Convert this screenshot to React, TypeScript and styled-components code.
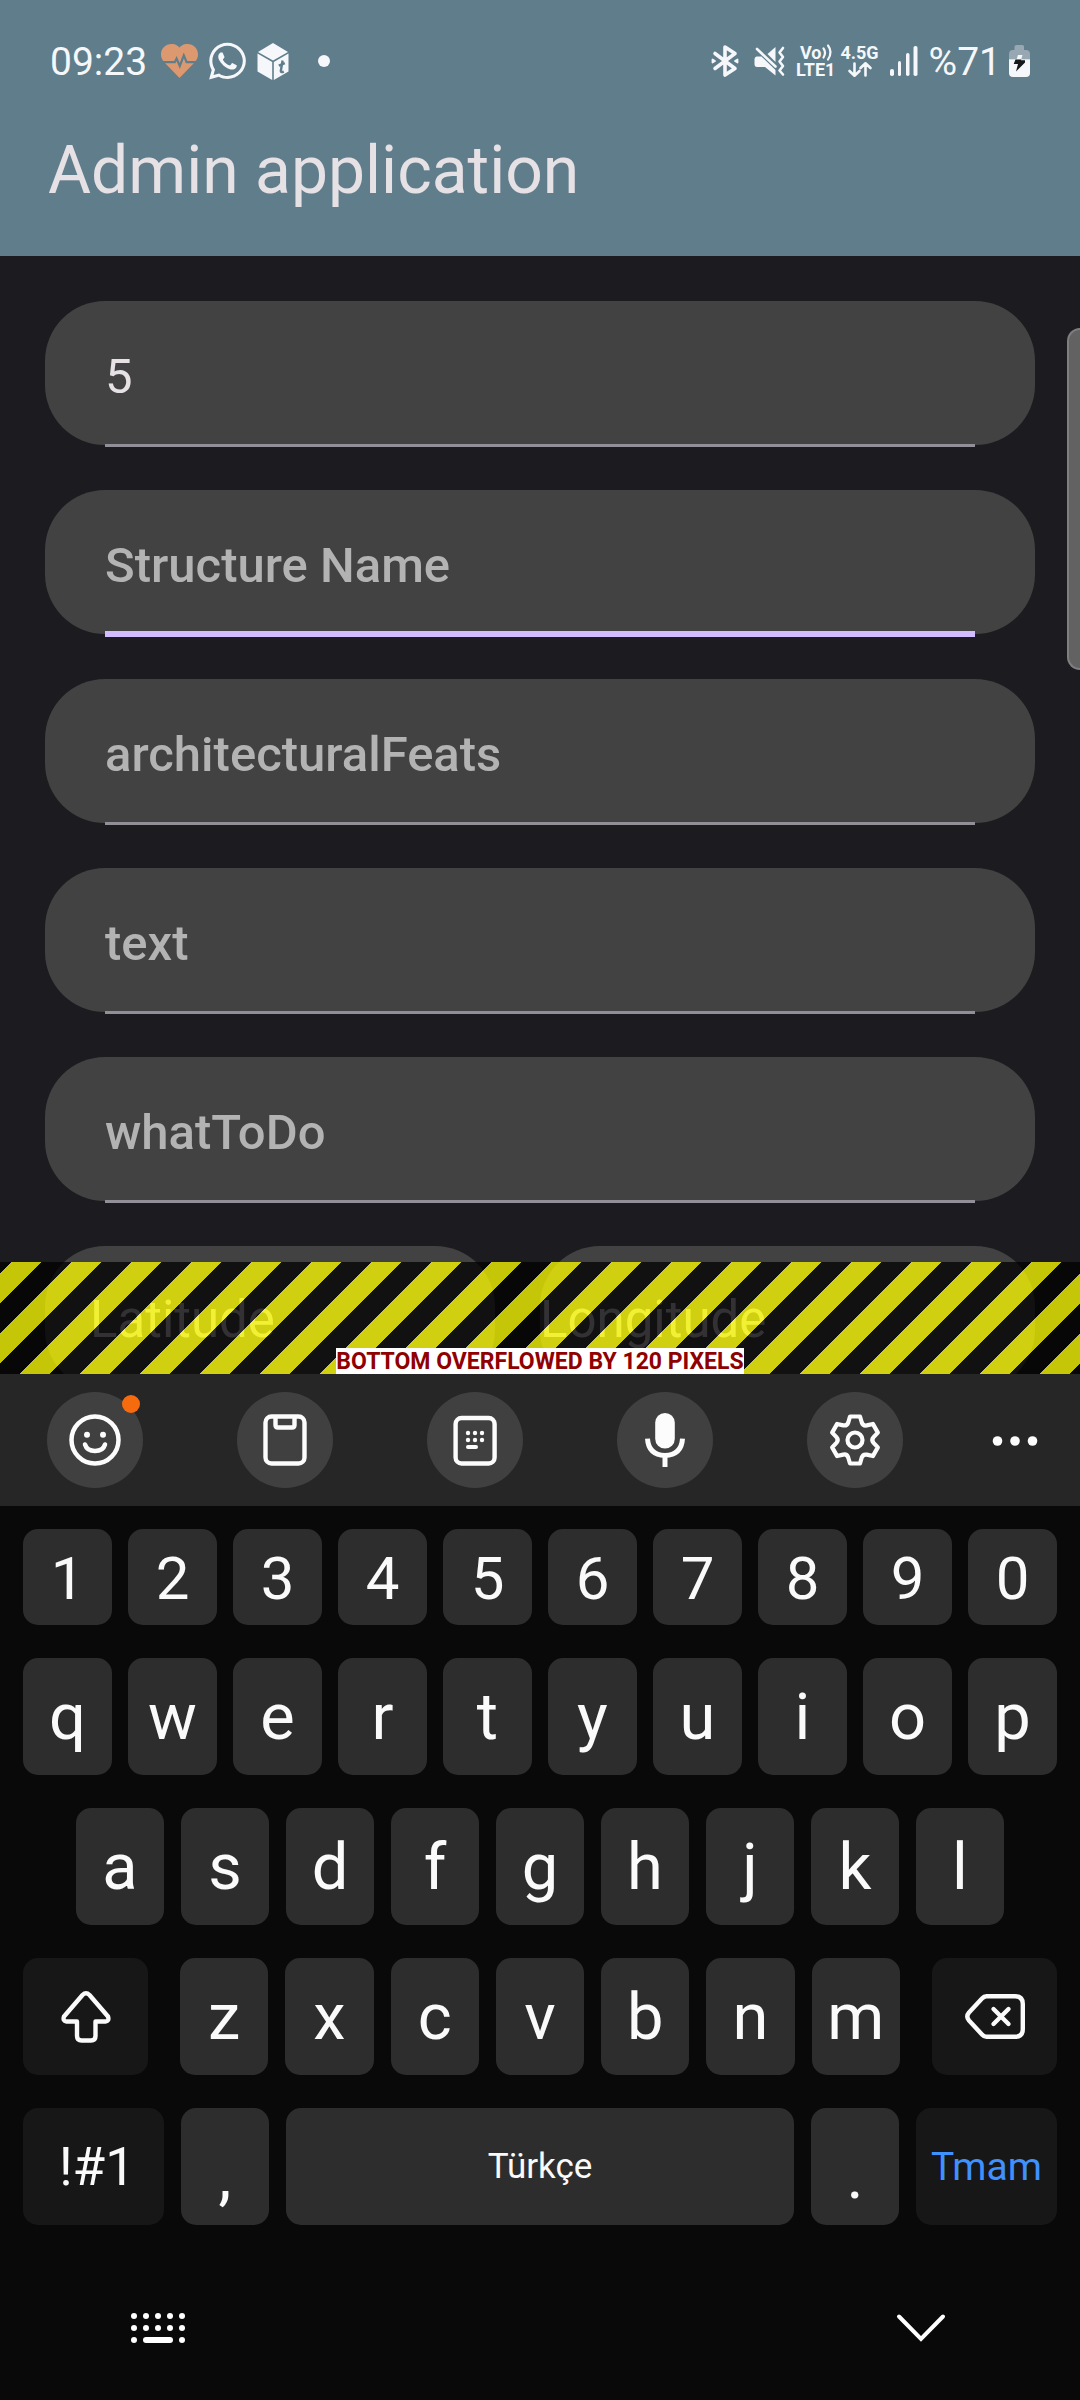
import React from "react";
import styled, { createGlobalStyle, css } from "styled-components";
import { FaWhatsapp } from "react-icons/fa";

const GlobalStyle = createGlobalStyle`
  *, *::before, *::after { box-sizing: border-box; }
  html, body { margin: 0; background: #090909; }
  body { font-family: Roboto, "Noto Sans", sans-serif; }
  button, input { font-family: inherit; margin: 0; padding: 0; border: 0; }
  svg { display: block; flex: none; overflow: visible; }
`;

const Screen = styled.div`
  position: relative;
  display: flex;
  flex-direction: column;
  height: 100vh;
  min-height: 1600px;
  overflow: hidden;
  background: #1c1b1f;
`;

/* ---------- header ---------- */

const Header = styled.header`
  flex: none;
  background: #607d8b;
`;

const StatusBar = styled.div`
  display: flex;
  justify-content: space-between;
  align-items: center;
  height: 88px;
  padding: 34px 50px 0 50px;
  color: #f5f7fa;
`;

const StatusGroup = styled.div<{ $gap: number }>`
  display: flex;
  align-items: center;
  gap: ${(p) => p.$gap}px;
`;

const StatusText = styled.span`
  padding-top: 2px;
  font-size: 39px;
  line-height: 52px;
`;

const Clock = styled(StatusText)`
  margin-right: 3px;
`;

const ChatIcon = styled(FaWhatsapp)`
  width: 37px;
  height: 42px;
`;

const NetworkBadge = styled.span`
  display: flex;
  flex-direction: column;
  align-items: center;
  font-size: 18px;
  line-height: 17px;
  font-weight: 700;
`;

const BadgeLine = styled.span`
  display: flex;
  align-items: center;
  height: 17px;
`;

const Dot = styled.span`
  width: 12px;
  height: 12px;
  margin-left: 18px;
  border-radius: 50%;
  background: currentColor;
`;

const TitleBar = styled.div`
  display: flex;
  align-items: center;
  height: 168px;
  padding: 0 48px 3px;
`;

const Title = styled.h1`
  margin: 0;
  color: #e6e1e5;
  font-size: 66px;
  line-height: 84px;
  font-weight: 400;
`;

/* ---------- form ---------- */

const Body = styled.main`
  position: relative;
  flex: 1;
  min-height: 0;
  overflow: hidden;
`;

const Form = styled.form`
  display: flex;
  flex-direction: column;
  gap: 45px;
  padding: 45px;
`;

const FieldRow = styled.div`
  display: grid;
  grid-template-columns: 450fr 495fr;
  gap: 45px;
`;

const Field = styled.label`
  position: relative;
  display: block;
  height: 144px;
  padding: 0 60px;
  border-radius: 60px;
  background: #424242;
`;

const HalfField = styled(Field)<{ $inset: number }>`
  padding: 0 0 0 ${(p) => p.$inset}px;
`;

const TextInput = styled.input<{ $light?: boolean }>`
  display: block;
  width: 100%;
  height: 144px;
  padding-top: ${(p) => (p.$light ? 2 : 6)}px;
  background: transparent;
  outline: none;
  color: #e6e1e5;
  font-size: ${(p) => (p.$light ? 51 : 49)}px;

  &::placeholder {
    color: ${(p) => (p.$light ? "#cac4d0" : "#b3b3b3")};
    font-weight: ${(p) => (p.$light ? 400 : 500)};
    opacity: 1;
  }
`;

const Underline = styled.span<{ $active?: boolean }>`
  position: absolute;
  left: 60px;
  right: 60px;
  bottom: -2px;
  height: 3px;
  background: #938f99;

  ${(p) =>
    p.$active &&
    css`
      bottom: -3px;
      height: 6px;
      background: #d0bcff;
    `}
`;

const OverflowBand = styled.div`
  position: absolute;
  left: 0;
  right: 0;
  bottom: 0;
  display: flex;
  justify-content: center;
  align-items: flex-end;
  height: 112px;
  background-image: linear-gradient(
    135deg,
    rgba(0, 0, 0, 0.75) 10%,
    rgba(255, 255, 0, 0.75) 10% 35%,
    rgba(0, 0, 0, 0.75) 35% 60%,
    rgba(255, 255, 0, 0.75) 60% 85%,
    rgba(0, 0, 0, 0.75) 85%
  );
  background-size: 60px 60px;
`;

const OverflowLabel = styled.span`
  padding-top: 2px;
  background: #fff;
  color: #900000;
  font-size: 23px;
  line-height: 24px;
  font-weight: 700;
  white-space: nowrap;
`;

const EdgeHandle = styled.div`
  position: absolute;
  top: 328px;
  right: 0;
  width: 13px;
  height: 342px;
  border: 2px solid #7f7f80;
  border-right: 0;
  border-radius: 14px 0 0 14px;
  background: #626263;
`;

/* ---------- keyboard ---------- */

const Keyboard = styled.section`
  flex: none;
  background: #090909;
  color: #fafafa;
`;

const Toolbar = styled.div`
  display: grid;
  grid-template-columns: repeat(5, 190fr) 130fr;
  align-items: center;
  justify-items: center;
  height: 132px;
  background: #262626;
`;

const ToolButton = styled.button<{ $plain?: boolean }>`
  position: relative;
  display: flex;
  align-items: center;
  justify-content: center;
  width: 96px;
  height: 96px;
  border-radius: 50%;
  background: ${(p) => (p.$plain ? "transparent" : "#404040")};
  color: #fcfcfc;
`;

const NewBadge = styled.span`
  position: absolute;
  top: 3px;
  right: 3px;
  width: 18px;
  height: 18px;
  border-radius: 50%;
  background: #f76b0f;
`;

const Keys = styled.div`
  display: flex;
  flex-direction: column;
  gap: 33px;
  padding: 23px 23px 31px;
`;

const KeyRow = styled.div<{ $columns: string; $gap?: number; $inset?: number }>`
  display: grid;
  grid-template-columns: ${(p) => p.$columns};
  gap: ${(p) => p.$gap ?? 17}px;
  padding: 0 ${(p) => p.$inset ?? 0}px;
`;

const Key = styled.button<{ $kind?: "digit" | "mark" | "space" | "symbols" | "done" | "icon" }>`
  display: flex;
  align-items: center;
  justify-content: center;
  min-width: 0;
  height: 117px;
  border-radius: 15px;
  background: #2d2d2d;
  color: #fafafa;
  font-size: 65px;
  line-height: 76px;

  ${(p) => p.$kind === "digit" && css`height: 96px; font-size: 60px; padding-top: 4px;`}
  ${(p) => p.$kind === "mark" && css`padding-top: 18px;`}
  ${(p) => p.$kind === "space" && css`font-size: 35px;`}
  ${(p) => p.$kind === "symbols" && css`background: #171717; font-size: 53px; padding-left: 7px;`}
  ${(p) => p.$kind === "done" && css`background: #171717; color: #3e91ff; font-size: 39px;`}
  ${(p) => p.$kind === "icon" && css`background: #171717;`}
`;

const NavBar = styled.nav`
  display: flex;
  align-items: center;
  justify-content: space-between;
  height: 144px;
  padding: 0 135px 0 131px;
`;

const NavButton = styled.button`
  display: flex;
  background: transparent;
  color: #fff;
`;

/* ---------- drawings ---------- */

const HeartIcon = () => (
  <svg width="37" height="34" viewBox="0 0 37 34">
    <path
      d="M18.5 3.6C15.700 .3 12.600 0 10.500 0 4.600 0 0 4.600 0 10.400c0 3 1.200 5.300 3 7.600L18.500 34 34 18c1.800-2.300 3-4.600 3-7.600C37 4.600 32.400 0 26.500 0c-2.100 0-5.200.3-8 3.600Z"
      fill="#dc9970"
    />
    <path d="M1 18.200h12.800l1.800-3.600 3.200 7.400 4-10.600 2.800 6.800H36" fill="none" stroke="#607d8b" strokeWidth="2.200" />
  </svg>
);

const CubeIcon = () => (
  <svg width="32" height="37" viewBox="0 0 32 37">
    <path d="M16 0 31 9 16 17.500 1 9Z" fill="currentColor" />
    <path d="M.5 10.500 15.200 19v18L.5 28.500Z M31.500 10.500 16.800 19v18l14.700-8.500Z" fill="currentColor" />
    <path d="M25.600 17.500 23.800 28q0 1.800 3 .6M21.800 22.600l6-2.400" fill="none" stroke="#607d8b" strokeWidth="2.400" />
  </svg>
);

const BluetoothIcon = () => (
  <svg width="28" height="32" viewBox="0 0 28 32" fill="none" stroke="currentColor" strokeWidth="3.600" strokeLinecap="round" strokeLinejoin="round">
    <path d="M4 8.500 24 23.500 14 30V2l10 6.500L4 23.500" />
    <path d="M1.500 14.500v3l2.500-1.500ZM26.500 14.500v3L24 16Z" strokeWidth="1.800" fill="currentColor" />
  </svg>
);

const MuteIcon = () => (
  <svg width="31" height="31" viewBox="0 0 31 31">
    <path d="M2.500 10.500h5L21.500 24v5.500L11 21H3Q.5 21 .5 18v-5q0-2 2-2.500Z" fill="currentColor" />
    <path d="M21.500 1v15L13.500 8Z" fill="currentColor" />
    <path d="M3 3 21.500 20.500" stroke="currentColor" strokeWidth="2.600" strokeLinecap="round" />
    <path d="m29 2-3.500 4.500 3.500 4.500-3.500 4.500 3.500 4.500-3.500 4.500 3.500 4" fill="none" stroke="currentColor" strokeWidth="2.600" strokeLinecap="round" strokeLinejoin="round" />
  </svg>
);

const WavesIcon = () => (
  <svg width="10" height="17" viewBox="0 0 10 17" fill="none" stroke="currentColor" strokeWidth="2.200" strokeLinecap="round">
    <path d="M1.500 4.500q3 4 0 9M6 1.500q5 6.500 0 14" />
  </svg>
);

const TransferIcon = () => (
  <svg width="24" height="15" viewBox="0 0 24 15" fill="none" stroke="currentColor" strokeWidth="2.600" strokeLinecap="round" strokeLinejoin="round">
    <path d="M6.500 1.500v12M1.500 9l5 4.700L11.500 9M17.500 13.500v-12M12.500 6l5-4.700 5 4.700" />
  </svg>
);

const SignalIcon = () => (
  <svg width="28" height="31" viewBox="0 0 28 31" fill="currentColor">
    <rect x="0" y="23" width="4" height="7" rx="1.800" />
    <rect x="8" y="15" width="3" height="15" rx="1.500" />
    <rect x="16" y="7" width="3.500" height="23" rx="1.700" />
    <rect x="23.500" y="0" width="4" height="30" rx="1.800" />
  </svg>
);

const BatteryIcon = () => (
  <svg width="21" height="32" viewBox="0 0 21 32">
    <path d="M7.500 0h6Q15 0 15 1.500V5h2q4 0 4 4v5.500H0V9q0-4 4-4h1.500V1.500Q5.500 0 7.500 0Z" fill="#97a8b2" />
    <path d="M0 14.200h21V28q0 4-4 4H4q-4 0-4-4Z" fill="currentColor" />
    <path d="M9 10h4.500l-1.300 4.400H7.500Z" fill="currentColor" />
    <path d="M6.500 14.600 4.700 19H9L7 26.500 16 17.500v-2.200h-4l.3-.7Z" fill="#15191c" />
  </svg>
);

const SmileIcon = () => (
  <svg width="52" height="52" viewBox="-26 -26 52 52" fill="none" stroke="currentColor" strokeWidth="4.500" strokeLinecap="round">
    <circle r="23.500" />
    <path d="M-10 4.500Q-8 11 0 11T10 4.500" />
    <circle cx="-8" cy="-5.300" r="3" fill="currentColor" stroke="none" />
    <circle cx="8" cy="-5.300" r="3" fill="currentColor" stroke="none" />
  </svg>
);

const ClipboardIcon = () => (
  <svg width="44" height="52" viewBox="-22 -26 44 52" fill="none" stroke="currentColor" strokeWidth="4.400">
    <rect x="-19.500" y="-23.500" width="39" height="47" rx="6" />
    <path d="M-9.500-23v8q0 2.500 2.500 2.500H7q2.500 0 2.500-2.500v-8" />
  </svg>
);

const TextModeIcon = () => (
  <svg width="44" height="52" viewBox="-22 -26 44 52" fill="currentColor">
    <rect x="-19.400" y="-22" width="39" height="45.500" rx="6" fill="none" stroke="currentColor" strokeWidth="4.400" />
    {[-7, 0].map((y) => [-7, 0, 7].map((x) => <circle key={`${x}${y}`} cx={x} cy={y} r="2.200" />))}
    <rect x="-9" y="5" width="12" height="4" rx="2" />
  </svg>
);

const MicIcon = () => (
  <svg width="40" height="56" viewBox="-20 -28 40 56">
    <rect x="-9.800" y="-27" width="19.600" height="35.500" rx="9.800" fill="currentColor" />
    <path d="M-17.500-1.300Q-16.500 15 0 15.500 16.500 15 17.500-1.300M0 15.500V27" fill="none" stroke="currentColor" strokeWidth="5" />
  </svg>
);

const gearPath = (() => {
  const turn = (x: number, y: number, step: number) => {
    const a = (step * Math.PI) / 3;
    return `${(x * Math.cos(a) - y * Math.sin(a)).toFixed(2)} ${(x * Math.sin(a) + y * Math.cos(a)).toFixed(2)}`;
  };
  return (
    [0, 1, 2, 3, 4, 5]
      .map(
        (s) =>
          `${s ? "L" : "M"}${turn(-5, -23.5, s)}L${turn(5, -23.5, s)}L${turn(6.8, -17.5, s)}Q${turn(8, -13.9, s)} ${turn(11.8, -14.6, s)}`
      )
      .join("") + "Z"
  );
})();

const GearIcon = () => (
  <svg width="52" height="52" viewBox="-26 -26 52 52" fill="none" stroke="currentColor" strokeWidth="4.200" strokeLinejoin="round">
    <path d={gearPath} />
    <circle r="7.500" />
  </svg>
);

const MoreIcon = () => (
  <svg width="46" height="10" viewBox="-23 -5 46 10" fill="currentColor">
    <circle cx="-17.500" cy="1" r="4.800" />
    <circle cx="0" cy="1" r="4.800" />
    <circle cx="17.500" cy="1" r="4.800" />
  </svg>
);

const ShiftIcon = () => (
  <svg width="50" height="52" viewBox="0 0 50 52" fill="none" stroke="currentColor" strokeWidth="4.400" strokeLinejoin="round">
    <path d="M21.500 4Q25 .6 28.500 4L47 25.500Q48.500 30 44.500 30.500H34.500V45Q34.500 49.500 30 49.500H20.500Q16 49.500 16 45V30.500H5.500Q1.500 30 3 25.500Z" />
  </svg>
);

const BackspaceIcon = () => (
  <svg width="60" height="45" viewBox="0 0 60 45" fill="none" stroke="currentColor" strokeWidth="4.400" strokeLinecap="round" strokeLinejoin="round">
    <path d="M21.500 2.200H50Q57.800 2.200 57.800 10V35Q57.800 42.800 50 42.800H21.500Q19 42.800 17 40.500L4 26.500Q.6 22.500 4 18.500L17 4.500Q19 2.200 21.500 2.200Z" />
    <path d="M28.500 15 43.500 30M43.500 15 28.500 30" />
  </svg>
);

const KeyboardIcon = () => (
  <svg width="54" height="30" viewBox="0 0 54 30" fill="currentColor">
    {[3, 15].map((y) => [3, 15, 27, 39, 51].map((x) => <circle key={`${x}-${y}`} cx={x} cy={y} r="3" />))}
    <circle cx="3" cy="27" r="3" />
    <rect x="12" y="24" width="30" height="6" rx="3" />
    <circle cx="51" cy="27" r="3" />
  </svg>
);

const ChevronIcon = () => (
  <svg width="48" height="28" viewBox="0 0 48 28" fill="none" stroke="currentColor" strokeWidth="4" strokeLinecap="round">
    <path d="M2 2.500 24 25 46 2.500" />
  </svg>
);

/* ---------- data ---------- */

const fields: { label: string; value?: string; active?: boolean }[] = [
  { label: "Id", value: "5" },
  { label: "Structure Name", active: true },
  { label: "architecturalFeats" },
  { label: "text" },
  { label: "whatToDo" },
];

const tools = [
  { label: "Emoji", icon: <SmileIcon />, isNew: true },
  { label: "Clipboard", icon: <ClipboardIcon /> },
  { label: "Keyboard modes", icon: <TextModeIcon /> },
  { label: "Voice input", icon: <MicIcon /> },
  { label: "Settings", icon: <GearIcon /> },
];

export default function App() {
  return (
    <>
      <GlobalStyle />
      <Screen>
        <Header>
          <StatusBar>
            <StatusGroup $gap={11}>
              <Clock>09:23</Clock>
              <HeartIcon />
              <ChatIcon />
              <CubeIcon />
              <Dot />
            </StatusGroup>
            <StatusGroup $gap={11}>
              <StatusGroup $gap={15}>
                <BluetoothIcon />
                <MuteIcon />
              </StatusGroup>
              <StatusGroup $gap={5}>
                <NetworkBadge>
                  <BadgeLine>
                    Vo
                    <WavesIcon />
                  </BadgeLine>
                  <BadgeLine>LTE1</BadgeLine>
                </NetworkBadge>
                <NetworkBadge>
                  <BadgeLine>4.5G</BadgeLine>
                  <BadgeLine>
                    <TransferIcon />
                  </BadgeLine>
                </NetworkBadge>
              </StatusGroup>
              <SignalIcon />
              <StatusGroup $gap={8}>
                <StatusText>%71</StatusText>
                <BatteryIcon />
              </StatusGroup>
            </StatusGroup>
          </StatusBar>
          <TitleBar>
            <Title>Admin application</Title>
          </TitleBar>
        </Header>

        <Body>
          <Form>
            {fields.map((f) => (
              <Field key={f.label}>
                <TextInput
                  type="text"
                  aria-label={f.label}
                  placeholder={f.value ? undefined : f.label}
                  defaultValue={f.value}
                />
                <Underline $active={f.active} />
              </Field>
            ))}
            <FieldRow>
              <HalfField $inset={45}>
                <TextInput $light type="text" aria-label="Latitude" placeholder="Latitude" />
              </HalfField>
              <HalfField $inset={0}>
                <TextInput $light type="text" aria-label="Longitude" placeholder="Longitude" />
              </HalfField>
            </FieldRow>
          </Form>
          <OverflowBand>
            <OverflowLabel>BOTTOM OVERFLOWED BY 120 PIXELS</OverflowLabel>
          </OverflowBand>
        </Body>

        <Keyboard aria-label="Keyboard">
          <Toolbar>
            {tools.map((t) => (
              <ToolButton key={t.label} type="button" aria-label={t.label}>
                {t.icon}
                {t.isNew && <NewBadge />}
              </ToolButton>
            ))}
            <ToolButton $plain type="button" aria-label="More">
              <MoreIcon />
            </ToolButton>
          </Toolbar>
          <Keys>
            <KeyRow $columns="repeat(10, 1fr)" $gap={16}>
              {[..."1234567890"].map((k) => (
                <Key key={k} type="button" $kind="digit">{k}</Key>
              ))}
            </KeyRow>
            <KeyRow $columns="repeat(10, 1fr)" $gap={16}>
              {[..."qwertyuiop"].map((k) => (
                <Key key={k} type="button">{k}</Key>
              ))}
            </KeyRow>
            <KeyRow $columns="repeat(9, 1fr)" $inset={53}>
              {[..."asdfghjkl"].map((k) => (
                <Key key={k} type="button">{k}</Key>
              ))}
            </KeyRow>
            <KeyRow $columns="125fr 720fr 125fr" $gap={32}>
              <Key type="button" $kind="icon" aria-label="Shift">
                <ShiftIcon />
              </Key>
              <KeyRow $columns="repeat(7, 1fr)">
                {[..."zxcvbnm"].map((k) => (
                  <Key key={k} type="button">{k}</Key>
                ))}
              </KeyRow>
              <Key type="button" $kind="icon" aria-label="Backspace">
                <BackspaceIcon />
              </Key>
            </KeyRow>
            <KeyRow $columns="141fr 88fr 508fr 88fr 141fr">
              <Key type="button" $kind="symbols">!#1</Key>
              <Key type="button" $kind="mark">,</Key>
              <Key type="button" $kind="space">Türkçe</Key>
              <Key type="button" $kind="mark">.</Key>
              <Key type="button" $kind="done">Tmam</Key>
            </KeyRow>
          </Keys>
          <NavBar>
            <NavButton type="button" aria-label="Switch keyboard">
              <KeyboardIcon />
            </NavButton>
            <NavButton type="button" aria-label="Hide keyboard">
              <ChevronIcon />
            </NavButton>
          </NavBar>
        </Keyboard>
        <EdgeHandle />
      </Screen>
    </>
  );
}
